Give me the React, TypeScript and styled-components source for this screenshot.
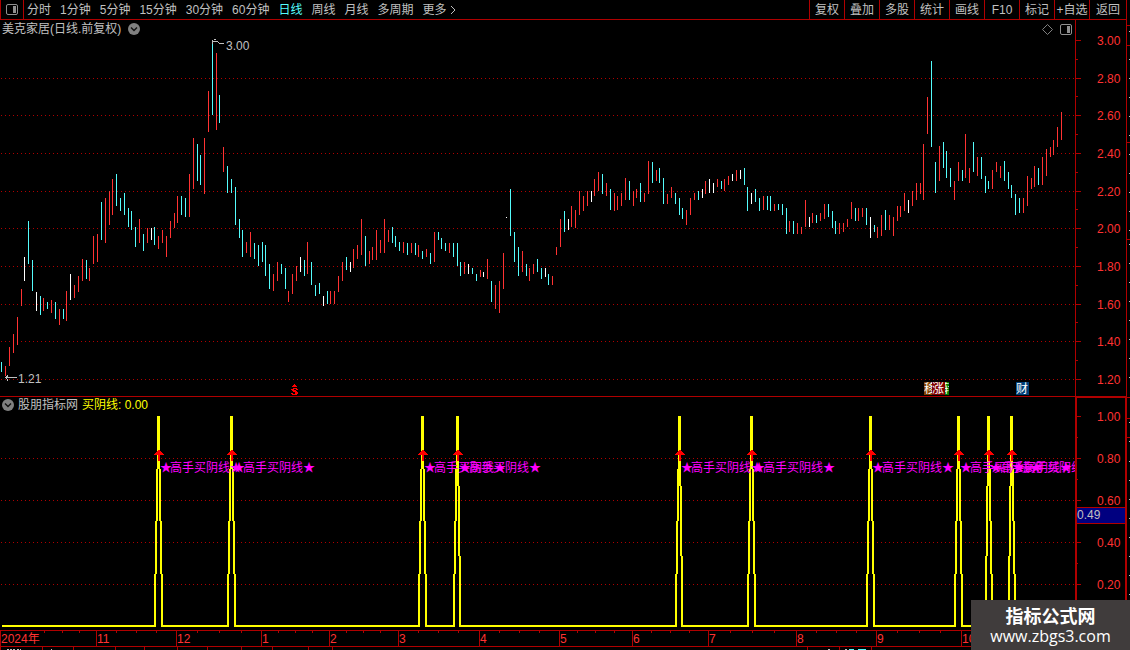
import React from 'react';
import styled, { createGlobalStyle } from 'styled-components';

const RED = '#ff3232';
const LINE = '#b00000';
const CYAN = '#54fcfc';
const GREY = '#c0c0c0';
const FONT = '"Liberation Sans", "Noto Sans CJK SC", sans-serif';

const GlobalStyle = createGlobalStyle`
  * { box-sizing: border-box; }
  body { margin: 0; background: #000; color: ${GREY}; font: 12px/16px ${FONT}; }
  button { margin: 0; padding: 0; border: 0; background: none; color: inherit; font: inherit; cursor: pointer; }
  svg { display: block; }
`;

const Screen = styled.div`
  position: relative;
  display: flex;
  min-height: 100vh;
  background: #000;
`;

const Main = styled.main`
  flex: 1;
  min-width: 0;
  display: flex;
  flex-direction: column;
  border-right: 1px solid ${LINE};
`;

const Toolbar = styled.header`
  display: flex;
  height: 20px;
  border-bottom: 1px solid ${LINE};
  white-space: nowrap;
`;

const LayoutButton = styled.button`
  width: 24px;
  display: flex;
  align-items: center;
  justify-content: center;
  border: solid ${LINE};
  border-width: 0 1px;
`;

const Periods = styled.nav`
  flex: 1;
  min-width: 0;
  overflow: hidden;
  display: flex;
  align-items: center;
  gap: 9px;
  padding-left: 3px;
`;

const Period = styled.button<{ $active?: boolean }>`
  display: flex;
  align-items: center;
  color: ${(p) => (p.$active ? CYAN : GREY)};
`;

const Tools = styled.div`
  display: flex;
`;

const Tool = styled.button`
  width: 35px;
  border-left: 1px solid ${LINE};
  &:last-child { width: 37px; }
`;

const Panel = styled.section`
  display: flex;
`;

const PricePanel = styled(Panel)`
  height: 377px;
  border-bottom: 1px solid ${LINE};
`;

const IndicatorPanel = styled(Panel)`
  height: 233px;
`;

const Plot = styled.div`
  flex: 1;
  min-width: 0;
`;

const PlotHeader = styled.div<{ $height: number; $gap: number }>`
  height: ${(p) => p.$height}px;
  display: flex;
  align-items: center;
  gap: ${(p) => p.$gap}px;
  padding: 0 3px 0 2px;
`;

const PlotTitle = styled.h1`
  margin: 0;
  font: inherit;
`;

const HeaderTools = styled.div`
  display: flex;
  align-items: center;
  gap: 7px;
  margin-left: auto;
`;

const Reading = styled.span`
  color: #ff0;
`;

const Axis = styled.div<{ $heavy?: boolean }>`
  position: relative;
  width: 51px;
  border-left: ${(p) => (p.$heavy ? 2 : 1)}px solid ${LINE};
  border-right: ${(p) => (p.$heavy ? 1 : 0)}px solid ${LINE};
  border-top: ${(p) => (p.$heavy ? 1 : 0)}px solid ${LINE};
`;

const Cursor = styled.output`
  position: absolute;
  top: 109px;
  left: 0;
  right: 0;
  height: 17px;
  line-height: 15px;
  border: solid ${LINE};
  border-width: 1px 0;
  background: #000080;
  color: ${GREY};
`;

const TimeAxis = styled.div`
  height: 17px;
  border: solid ${LINE};
  border-width: 1px 0;
`;

const SideStrip = styled.aside`
  width: 3px;
`;

const Watermark = styled.div`
  position: absolute;
  right: 0;
  bottom: 0;
  width: 159px;
  height: 50px;
  padding-top: 4px;
  background: #403c3c;
  color: #fff;
  text-align: center;
`;

const WatermarkName = styled.strong`
  display: block;
  font: bold 18px/22px "Noto Sans CJK SC", sans-serif;
`;

const WatermarkSite = styled.span`
  display: block;
  font: 16px/20px "Open Sans", sans-serif;
`;

/* Each entry: x, high, low, kind (r rise, c fall, w flat) */
const BARS = `
1 362 372 c,5 366 376 r,9 347 366 r,13 334 353 r,17 317 345 r,21 289 306 r,24 257 281 w,28 221 264 c,
32 260 291 c,36 292 311 w,40 296 315 c,43 298 311 r,47 302 309 c,51 300 313 r,55 302 319 c,59 309 325 r,
63 309 319 c,66 291 321 r,70 274 300 w,74 285 298 r,78 276 292 r,82 259 281 r,86 260 279 c,89 268 281 r,
93 236 264 r,97 234 262 r,101 202 240 c,105 198 243 r,109 191 225 r,112 179 215 r,116 174 206 c,120 198 211 c,
124 193 215 c,128 208 227 c,131 211 230 c,135 227 247 c,139 219 243 r,143 234 251 c,147 228 243 r,151 228 240 w,
154 227 245 c,158 236 249 r,162 230 243 r,166 236 257 r,170 221 238 r,174 213 228 r,177 196 223 r,181 196 215 c,
185 198 217 c,189 174 217 r,193 138 189 r,197 144 181 c,200 155 185 c,204 138 194 r,208 91 132 r,212 42 115 c,
216 53 130 r,219 95 123 c,223 147 172 r,227 166 193 c,231 179 193 c,235 187 225 c,239 219 238 c,242 230 257 c,
246 242 253 r,250 232 257 r,254 243 259 c,258 245 266 c,262 242 262 c,265 245 276 c,269 264 289 c,273 274 291 r,
277 262 281 r,281 264 274 c,285 268 289 c,288 291 302 r,292 274 294 r,296 266 281 r,300 257 272 w,304 260 276 c,
307 242 274 r,311 262 285 c,315 285 296 c,319 283 294 c,323 296 306 w,327 291 304 c,330 291 304 r,334 291 304 r,
338 276 292 r,342 262 281 r,346 257 270 c,350 262 272 w,353 249 268 r,357 245 259 r,361 219 255 r,365 236 266 c,
369 251 264 r,372 247 260 r,376 230 260 r,380 240 253 r,384 219 253 r,388 230 242 r,392 227 243 c,395 236 247 c,
399 242 251 c,403 242 253 r,407 243 255 c,411 243 253 r,415 243 255 c,418 245 257 r,422 251 259 c,426 249 257 r,
430 253 264 c,434 232 262 r,438 232 240 c,441 238 249 c,445 243 251 c,449 243 253 r,453 243 257 c,457 243 266 c,
460 262 276 c,464 262 274 r,468 264 274 w,472 268 274 c,476 274 281 c,480 270 277 r,483 272 277 w,487 259 279 r,
491 281 302 c,495 285 309 r,499 281 313 r,503 253 289 r,506 217 218 w,510 189 236 c,514 232 262 c,518 247 276 c,
522 251 272 r,526 264 276 c,529 268 281 r,533 264 274 r,537 259 272 c,541 268 279 c,545 268 277 w,548 274 285 c,
552 276 285 r,556 247 255 r,560 219 247 r,564 211 232 c,568 219 230 w,571 206 227 r,575 210 228 r,579 191 215 r,
583 196 211 r,587 191 206 r,591 191 202 w,594 179 196 r,598 172 191 r,602 174 194 c,606 183 196 r,610 189 210 c,
614 193 211 r,617 196 210 r,621 193 206 r,625 178 200 r,629 181 200 c,633 191 206 r,636 189 198 r,640 183 202 c,
644 193 202 r,648 161 194 r,652 162 183 c,656 170 181 r,659 168 183 c,663 178 204 c,667 194 204 r,671 187 198 r,
675 193 204 c,679 198 215 c,682 208 219 c,686 210 225 r,690 198 215 r,694 193 200 r,698 191 200 c,702 189 198 w,
705 181 194 r,709 179 193 w,713 183 193 w,717 179 187 r,721 181 189 c,724 179 191 r,728 176 185 r,732 174 181 w,
736 170 181 r,740 170 179 w,744 168 185 c,747 187 211 c,751 193 204 w,755 189 202 c,759 198 211 c,763 196 210 r,
767 196 210 c,770 196 211 c,774 204 211 r,778 204 210 c,782 204 215 c,786 208 234 c,789 221 232 r,793 221 234 c,
797 223 234 r,801 227 234 r,805 200 227 r,809 217 227 w,812 213 223 r,816 215 223 c,820 213 221 r,824 204 219 r,
828 204 217 c,832 211 228 c,835 221 234 c,839 223 234 r,843 223 232 r,847 219 227 r,851 202 219 r,855 208 221 c,
858 208 221 r,862 208 217 r,866 208 225 c,870 217 238 w,874 225 232 c,877 227 238 r,881 215 236 r,885 210 230 c,
889 215 230 r,893 217 236 r,897 206 221 r,900 206 217 r,904 193 211 r,908 200 213 w,912 191 206 r,916 183 200 r,
920 183 194 r,923 144 200 r,927 97 134 r,931 61 147 c,935 162 193 c,939 146 181 r,943 142 168 c,946 151 178 c,
950 168 187 c,954 181 200 r,958 162 181 r,962 170 181 c,965 134 178 r,969 168 183 r,973 142 172 c,977 157 176 r,
981 157 179 c,985 176 193 c,988 181 189 c,992 170 189 r,996 162 172 r,1000 166 178 r,1004 161 181 c,1008 172 189 c,
1011 185 198 c,1015 194 215 c,1019 198 213 c,1023 198 213 r,1027 176 206 r,1031 178 189 r,1034 166 187 r,
1038 168 185 c,1042 157 185 r,1046 149 176 r,1050 147 157 r,1053 140 155 r,1057 127 147 r,1061 112 140 r`
  .trim()
  .split(/,\s*/)
  .map((entry) => {
    const [x, high, low, kind] = entry.split(' ');
    return { x: +x, high: +high, low: +low, kind };
  });

const BAR_COLOURS: Record<string, string> = { r: RED, c: CYAN, w: '#fff' };

const PRICE_LEVELS: [string, number][] = [
  ['3.00', 40], ['2.80', 78], ['2.60', 115], ['2.40', 153], ['2.20', 191],
  ['2.00', 228], ['1.80', 266], ['1.60', 304], ['1.40', 341], ['1.20', 379],
];

const SIGNAL_LEVELS: [string, number][] = [
  ['1.00', 416], ['0.80', 458], ['0.60', 500], ['0.40', 542], ['0.20', 584],
];

/* Buy signals: x of the previous, the signal and the next trading day */
const SIGNALS = [
  [154, 158, 162], [227, 231, 235], [418, 422, 426], [453, 457, 460], [675, 679, 682],
  [747, 751, 755], [866, 870, 874], [954, 958, 962], [985, 988, 992], [1008, 1011, 1015],
];

const PEAK_Y = 416;
const BASE_Y = 627;

/* One side of a spike, as two-pixel-wide steps from the peak to the base line */
function leg(from: number, days: number, direction: number) {
  const steps = Array.from({ length: days }, (_, k) => {
    const top = Math.round(PEAK_Y + (k * 210) / days);
    const bottom = k === days - 1 ? BASE_Y : Math.round(PEAK_Y + ((k + 1) * 210) / days);
    return `M${from + k * direction} ${top}h2V${bottom}h-2z`;
  });
  return steps.join('');
}

const SPIKES = SIGNALS.map(([a, b, c]) => leg(b - 1, b - a, -1) + leg(b, c - b, 1)).join('');

const BASE_LINE =
  'M2 626' + SIGNALS.map(([a, , c]) => `H${a + 2}M${c - 1} 626`).join('') + 'H1062';

const MONTHS: [string, number][] = [
  ['2024年', 0], ['11', 96], ['12', 176], ['1', 261], ['2', 329], ['3', 398], ['4', 479],
  ['5', 559], ['6', 632], ['7', 708], ['8', 796], ['9', 876], ['10', 961],
];

const WEEK_TICKS = [
  44, 62, 79, 116, 136, 156, 197, 219, 241, 278, 295, 312, 346, 363, 380, 418, 438, 458, 499, 519, 539,
  577, 595, 614, 651, 670, 689, 730, 752, 774, 816, 836, 856, 897, 919, 940,
];

const LOWER_TICKS = [0, 42, 73, 115, 144, 177, 207, 241, 272, 308, 332, 807, 839, 871];

const PERIODS = ['分时', '1分钟', '5分钟', '15分钟', '30分钟', '60分钟', '日线', '周线', '月线', '多周期'];
const TOOLS = ['复权', '叠加', '多股', '统计', '画线', 'F10', '标记', '+自选', '返回'];

function SplitIcon({ color }: { color: string }) {
  return (
    <svg width="12" height="11" fill="none">
      <rect x="0.5" y="0.5" width="11" height="10" rx="1.5" stroke={color} />
      <rect x="7" y="2" width="3" height="7" fill={color} />
    </svg>
  );
}

function CollapseIcon() {
  return (
    <svg width="12" height="12" fill="none">
      <circle cx="6" cy="6" r="6" fill="#808080" />
      <path d="M3 4.5L6 7.5L9 4.5" stroke="#111" strokeWidth="1.4" />
    </svg>
  );
}

function GridLines({ levels }: { levels: [string, number][] }) {
  return (
    <g stroke={LINE} strokeDasharray="1 3" shapeRendering="crispEdges">
      {levels.slice(1).map(([label, y]) => (
        <line key={label} x1="1" x2="100%" y1={y + 0.5} y2={y + 0.5} />
      ))}
    </g>
  );
}

function Scale({ levels, top, height, inset }: { levels: [string, number][]; top: number; height: number; inset: number }) {
  return (
    <svg width="100%" height={height}>
      <g transform={`translate(${-inset} ${-top})`}>
        {levels.map(([label, y], i) => {
          const next = levels[i + 1] ? levels[i + 1][1] : y + 42;
          return (
            <g key={label}>
              <rect x="1" y={y} width="5" height="1" fill={LINE} />
              <rect x="1" y={Math.floor((y + next) / 2)} width="2" height="1" fill={LINE} />
              <text x="22" y={y + 5} fill={RED}>{label}</text>
            </g>
          );
        })}
      </g>
    </svg>
  );
}

function EventTag({ x, width, fill, shift = 0, children }: { x: number; width: number; fill: string; shift?: number; children: string }) {
  return (
    <svg x={x} y="382" width={width} height="13">
      <rect width="100%" height="100%" fill={fill} />
      <text x={shift} y="11" fill="#fff">{children}</text>
    </svg>
  );
}

function PriceChart() {
  return (
    <svg width="100%" height="358" role="img" aria-label="日线价格走势">
      <g transform="translate(0 -38)">
        <GridLines levels={PRICE_LEVELS} />
        {BARS.map((b) => (
          <rect key={b.x} x={b.x} y={b.high} width="1" height={b.low - b.high} fill={BAR_COLOURS[b.kind]} />
        ))}
        <g stroke={GREY} fill="none" shapeRendering="crispEdges">
          <path d="M216 39.5H213.5M212.5 40V44M213 41.5H217L220 43.5H224" />
          <path d="M5 377.5H17M8 375.5L5.5 377.5L8 380.5" />
        </g>
        <text x="226" y="50" fill={GREY}>3.00</text>
        <text x="18" y="383" fill={GREY}>1.21</text>
        <path
          d="M294 384h1v1h1v1h1v1h-5v-1h1v-1h1zM293 388h4v1h1v1h-2v-1h-2v1h2v1h1v1h1v2h-1v1h-5v-1h-1v-1h2v1h2v-2h-2v-1h-1v-1h-1v-1h1z"
          fill="red"
          shapeRendering="crispEdges"
        />
        <EventTag x={924} width={8} fill="#804000">移</EventTag>
        <EventTag x={932} width={13} fill="#800000">涨</EventTag>
        <EventTag x={945} width={4} fill="#008000" shift={-2}>转</EventTag>
        <EventTag x={1016} width={13} fill="#004078">财</EventTag>
      </g>
    </svg>
  );
}

function SignalChart() {
  return (
    <svg width="100%" height="217" role="img" aria-label="买阴线指标">
      <g transform="translate(0 -413)">
        <GridLines levels={SIGNAL_LEVELS} />
        <path d={SPIKES} fill="#ff0" />
        <path d={BASE_LINE} stroke="#ff0" strokeWidth="2" />
        {SIGNALS.map(([, x]) => (
          <g key={x} fill="#f0f">
            <text x={x + 8} y="472" textAnchor="middle" fontSize="12">★</text>
            <text x={x + 12} y="472" fontSize="12">高手买阴线</text>
            <text x={x + 78} y="472" textAnchor="middle" fontSize="12">★</text>
          </g>
        ))}
        {SIGNALS.map(([, x]) => (
          <path key={x} d={`M${x + 1} 449l5 6h-4v6h-2v-6h-4z`} fill="red" shapeRendering="crispEdges" />
        ))}
      </g>
    </svg>
  );
}

function TimeScale() {
  return (
    <svg width="100%" height="15">
      {WEEK_TICKS.map((x) => (
        <rect key={x} x={x} width="1" height="2" fill={LINE} />
      ))}
      {MONTHS.map(([label, x]) => (
        <g key={label}>
          <rect x={x} width="1" height="15" fill={LINE} />
          <text x={x + 1} y="12" fill={RED}>{label}</text>
        </g>
      ))}
    </svg>
  );
}

export default function App() {
  return (
    <Screen>
      <GlobalStyle />
      <Main>
        <Toolbar>
          <LayoutButton aria-label="布局"><SplitIcon color="#909090" /></LayoutButton>
          <Periods>
            {PERIODS.map((name) => (
              <Period key={name} $active={name === '日线'}>{name}</Period>
            ))}
            <Period>
              更多
              <svg width="10" height="10" fill="none"><path d="M4 1L8 5L4 9" stroke={GREY} /></svg>
            </Period>
          </Periods>
          <Tools>
            {TOOLS.map((name) => <Tool key={name}>{name}</Tool>)}
          </Tools>
        </Toolbar>

        <PricePanel>
          <Plot>
            <PlotHeader $height={18} $gap={7}>
              <PlotTitle>美克家居(日线.前复权)</PlotTitle>
              <button aria-label="展开"><CollapseIcon /></button>
              <HeaderTools>
                <button aria-label="标注">
                  <svg width="11" height="11" fill="none"><path d="M5.5 0.5L10.5 5.5L5.5 10.5L0.5 5.5Z" stroke="#808080" /></svg>
                </button>
                <button aria-label="侧栏"><SplitIcon color="#909090" /></button>
              </HeaderTools>
            </PlotHeader>
            <PriceChart />
          </Plot>
          <Axis><Scale levels={PRICE_LEVELS} top={20} height={376} inset={1} /></Axis>
        </PricePanel>

        <IndicatorPanel>
          <Plot>
            <PlotHeader $height={16} $gap={4}>
              <button aria-label="展开"><CollapseIcon /></button>
              <span>股朋指标网</span>
              <Reading>买阴线: 0.00</Reading>
            </PlotHeader>
            <SignalChart />
          </Plot>
          <Axis $heavy>
            <Scale levels={SIGNAL_LEVELS} top={398} height={232} inset={2} />
            <Cursor>0.49</Cursor>
          </Axis>
        </IndicatorPanel>

        <TimeAxis><TimeScale /></TimeAxis>
        <svg width="100%" height="3">
          {LOWER_TICKS.map((x) => <rect key={x} x={x} width="1" height="3" fill={LINE} />)}
          <path d="M7 2.5h8M17 2.5h4M51 2.5h1M828 2.5h2M845 2.5h2" stroke={GREY} strokeDasharray="2 1" />
          <path d="M849 2.5h5M858 2.5h8" stroke={CYAN} />
        </svg>
      </Main>

      <SideStrip>
        <svg width="3" height="650">
          <path d="M0 25.5h3M0 45.5h3M0 142.5h3M0 239.5h3M0 397.5h3M0 418.5h3M0 437.5h3" stroke={LINE} />
          <path d="M2.5 31V37M2.5 59V239M2.5 244V396M2.5 422V444M2.5 461V600" stroke={GREY} strokeDasharray="1 18" />
        </svg>
      </SideStrip>

      <Watermark>
        <WatermarkName>指标公式网</WatermarkName>
        <WatermarkSite>www.zbgs3.com</WatermarkSite>
      </Watermark>
    </Screen>
  );
}
